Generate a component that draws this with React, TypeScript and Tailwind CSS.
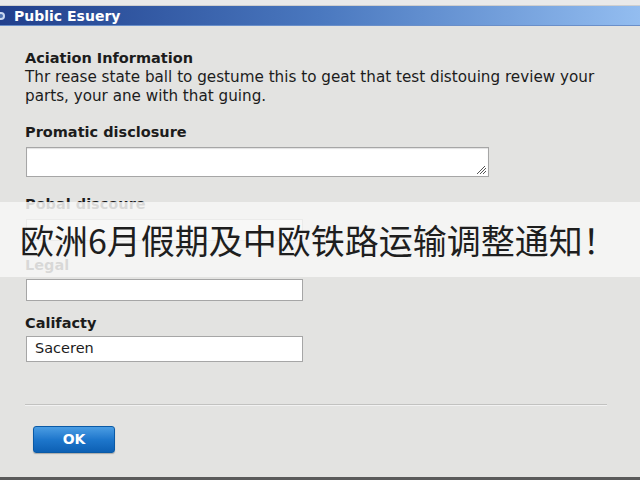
import React from "react";

const font = { fontFamily: '"DejaVu Sans", Verdana, sans-serif' };

function Label({ children, className = "" }: { children: React.ReactNode; className?: string }) {
  return <div className={`text-[14.5px] font-bold leading-[19px] text-[#1c1c1c] ${className}`}>{children}</div>;
}

export default function App() {
  return (
    <div className="relative w-[640px] h-[480px] overflow-hidden bg-[#e3e3e1]" style={font}>
      <div className="h-[6px] bg-[#e9e9e9] border-b border-[#cfcfcf]" />
      <div className="h-[20px] flex items-center bg-gradient-to-r from-[#213f8c] via-[#4a78bf] to-[#93bdf0] border-b border-[#6a8fc9]">
        <svg width="7" height="12" viewBox="0 0 7 12" className="mr-[7px]">
          <circle cx="1" cy="6" r="4" fill="#c8d6f0" />
          <circle cx="1" cy="6" r="2" fill="#4a6fb0" />
        </svg>
        <span className="text-[14px] font-bold text-white leading-none">Public Esuery</span>
      </div>

      <div className="pl-[25px] pr-[25px]">
        <Label className="mt-[23px]">Aciation Information</Label>
        <p className="text-[15.2px] leading-[19px] text-[#1c1c1c] w-[590px]">
          Thr rease state ball to gestume this to geat that test distouing review your parts, your ane with that guing.
        </p>

        <Label className="mt-[17px]">Promatic disclosure</Label>
        <div className="relative mt-[5px] ml-[1px] w-[463px] h-[30px] bg-white border border-[#a6a6a6] shadow-[inset_0_1px_1px_rgba(0,0,0,0.12)]">
          <svg width="12" height="10" viewBox="0 0 12 10" className="absolute right-[1px] bottom-[1px]">
            <path d="M2 9 L10 1 M5 9 L11 3 M8 9 L11 6" stroke="#555" strokeWidth="1" />
          </svg>
        </div>

        <Label className="mt-[18px]">Pobal discoure</Label>
        <div className="mt-[5px] ml-[1px] w-[277px] h-[22px] bg-white border border-[#a6a6a6]" />

        <Label className="mt-[15px]">Legal</Label>
        <div className="mt-[4px] ml-[1px] w-[277px] h-[22px] bg-white border border-[#a6a6a6]" />

        <Label className="mt-[13px]">Califacty</Label>
        <div className="mt-[3px] ml-[1px] w-[277px] h-[26px] bg-white border border-[#a6a6a6] flex items-center pl-[8px] text-[14.5px] text-[#1c1c1c]">
          Saceren
        </div>

        <div className="mt-[42px] h-[2px] w-[582px] bg-[#c2c2c0] border-b border-[#f2f2f2]" />

        <button className="mt-[20px] ml-[8px] w-[82px] h-[27px] rounded-[3px] border border-[#0a5aa6] bg-gradient-to-b from-[#4a9de3] via-[#1e77cc] to-[#0c60b4] text-white text-[14px] font-bold flex items-center justify-center shadow-[0_1px_1px_rgba(0,0,0,0.25)]">
          OK
        </button>
      </div>

      <div className="absolute left-0 right-0 bottom-0 h-[3px] bg-[#5a5a5a]" />

      <div className="absolute left-0 right-0 top-[202px] h-[75px] bg-[rgba(247,247,246,0.86)] flex items-center pl-[20px]">
        <span
          className="text-[34px] leading-none text-[#1e1e1e]"
          style={{ fontFamily: '"Noto Sans CJK SC", "Noto Sans", sans-serif' }}
        >
          欧洲6月假期及中欧铁路运输调整通知！
        </span>
      </div>
    </div>
  );
}
